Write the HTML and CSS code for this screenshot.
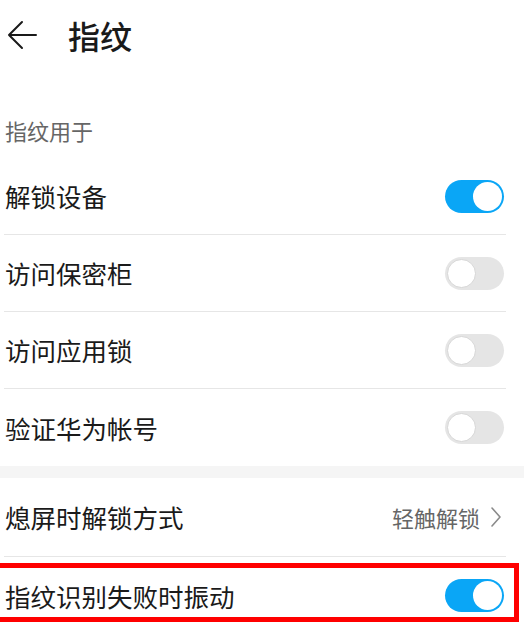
FILE: index.html
```html
<!DOCTYPE html>
<html lang="zh-CN">
<head>
<meta charset="utf-8">
<title>指纹</title>
<link rel="stylesheet" href="styles.css">
</head>
<body>
<div class="page">
  <header class="topbar">
    <svg class="back" width="30" height="30" viewBox="0 0 30 30" aria-hidden="true">
      <path d="M2 15H29M15 2L2 15L15 28" fill="none" stroke="#1a1a1a" stroke-width="2" stroke-linecap="round" stroke-linejoin="round"/>
    </svg>
    <h1 class="title">指纹</h1>
  </header>

  <div class="subhead">指纹用于</div>

  <ul class="list">
    <li class="row"><span class="label">解锁设备</span><span class="switch on"></span></li>
    <li class="row"><span class="label">访问保密柜</span><span class="switch"></span></li>
    <li class="row"><span class="label">访问应用锁</span><span class="switch"></span></li>
    <li class="row"><span class="label">验证华为帐号</span><span class="switch"></span></li>
  </ul>

  <div class="gap"></div>

  <ul class="list list-second">
    <li class="row">
      <span class="label">熄屏时解锁方式</span>
      <span class="value">轻触解锁
        <svg class="chev" width="12" height="22" viewBox="0 0 12 22" aria-hidden="true">
          <path d="M2 2L10 11L2 20" fill="none" stroke="#8a8a8a" stroke-width="1.6" stroke-linecap="round" stroke-linejoin="round"/>
        </svg>
      </span>
    </li>
    <li class="row"><span class="label">指纹识别失败时振动</span><span class="switch on"></span></li>
  </ul>

  <div class="highlight"></div>
</div>
</body>
</html>
```

FILE: styles.css
```css
html, body {
  margin: 0;
  padding: 0;
  background: #ffffff;
}

body {
  font-family: "Noto Sans CJK SC", "Noto Sans", sans-serif;
  color: #1a1a1a;
}

.page {
  position: relative;
  width: 524px;
  height: 627px;
  overflow: hidden;
}

.topbar {
  height: 72px;
  display: flex;
  align-items: center;
  padding-left: 7px;
}

.back {
  display: block;
  margin-top: -2px;
}

.title {
  margin: -2px 0 0 31px;
  font-size: 32px;
  font-weight: 500;
  line-height: 32px;
}

.subhead {
  height: 86px;
  box-sizing: border-box;
  display: flex;
  align-items: flex-end;
  padding: 0 0 17px 5px;
  font-size: 22px;
  line-height: 22px;
  color: #666666;
}

.list {
  list-style: none;
  margin: 0 18px 0 4px;
  padding: 0;
}

.row {
  height: 76px;
  display: flex;
  align-items: center;
  justify-content: space-between;
  padding: 0 2px 0 1px;
  border-bottom: 1px solid #e6e6e6;
}

.row:last-child {
  border-bottom: none;
  height: 77px;
}

.list-second .row:first-child {
  height: 78px;
}

.label {
  font-size: 25.5px;
  line-height: 26px;
  color: #1a1a1a;
}

.value {
  display: flex;
  align-items: center;
  gap: 10px;
  font-size: 22px;
  line-height: 22px;
  color: #666666;
  margin-right: 2px;
}

.chev {
  display: block;
}

.gap {
  height: 12px;
  background: #f5f5f5;
}

.switch {
  position: relative;
  width: 59px;
  height: 33px;
  border-radius: 17px;
  background: #e5e5e5;
  flex: none;
}

.switch::after {
  content: "";
  position: absolute;
  top: 2px;
  left: 2px;
  width: 29px;
  height: 29px;
  box-sizing: border-box;
  border-radius: 50%;
  background: #ffffff;
  border: 1px solid #d6d6d6;
}

.switch.on {
  background: #0aa6f6;
}

.switch.on::after {
  left: auto;
  right: 2px;
  border: none;
}

.highlight {
  position: absolute;
  top: 563px;
  left: -5px;
  width: 524px;
  height: 59px;
  box-sizing: border-box;
  border: 5px solid #ff0000;
  pointer-events: none;
}
```
